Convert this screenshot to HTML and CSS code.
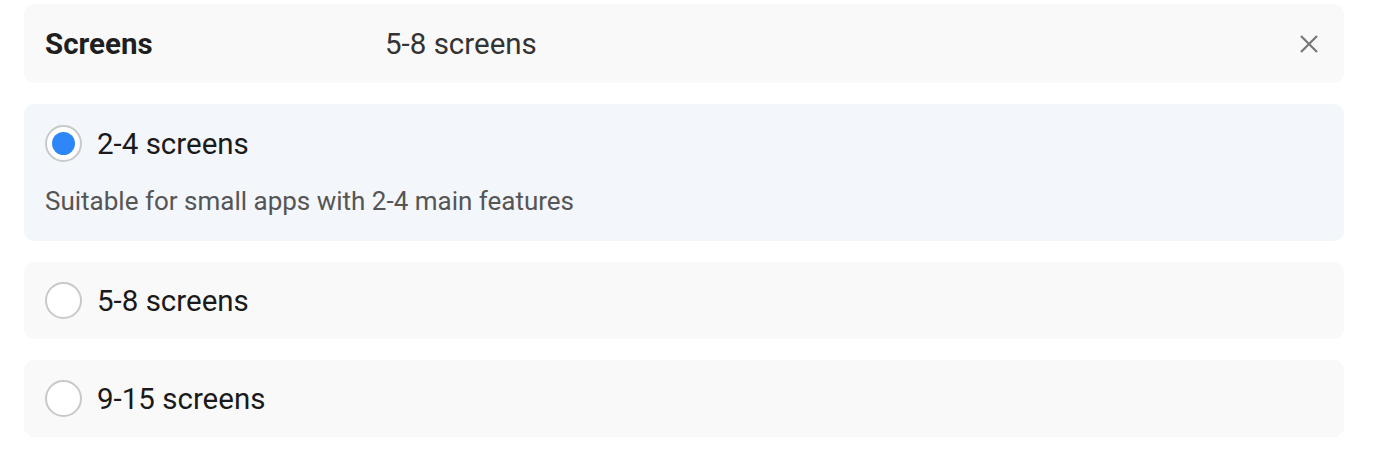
FILE: index.html
```html
<!DOCTYPE html>
<html lang="en">
<head>
<meta charset="utf-8">
<title>Screens</title>
<link rel="stylesheet" href="styles.css">
</head>
<body>
<div class="panel">
  <div class="header">
    <div class="header-label">Screens</div>
    <div class="header-value">5-8 screens</div>
    <button class="close" aria-label="Close">
      <svg width="20" height="20" viewBox="0 0 20 20"><path d="M2 2 L18 18 M18 2 L2 18" stroke="#777" stroke-width="2.2" fill="none"/></svg>
    </button>
  </div>
  <div class="option selected">
    <div class="option-row">
      <span class="radio checked"><span class="dot"></span></span>
      <span class="option-label">2-4 screens</span>
    </div>
    <div class="option-desc">Suitable for small apps with 2-4 main features</div>
  </div>
  <div class="option">
    <div class="option-row">
      <span class="radio"></span>
      <span class="option-label">5-8 screens</span>
    </div>
  </div>
  <div class="option">
    <div class="option-row">
      <span class="radio"></span>
      <span class="option-label">9-15 screens</span>
    </div>
  </div>
</div>
</body>
</html>
```
FILE: styles.css
```css
* { box-sizing: border-box; }
html, body { margin: 0; padding: 0; background: #ffffff; }
body {
  font-family: Roboto, "Liberation Sans", Arial, sans-serif;
  color: #1a1a1a;
}
.panel {
  width: 1320px;
  margin-left: 24px;
  padding-top: 4px;
  display: flex;
  flex-direction: column;
  gap: 21px;
}
.header {
  height: 79px;
  background: #f9f9f9;
  border-radius: 10px;
  display: flex;
  align-items: center;
  padding: 0 25px 0 21px;
}
.header-label {
  width: 340px;
  font-size: 29.5px;
  line-height: 34px;
  font-weight: 700;
  color: #1f1f1f;
}
.header-value {
  flex: 1;
  font-size: 29.5px;
  line-height: 34px;
  color: #333;
}
.close {
  border: 0;
  background: none;
  padding: 0;
  width: 20px;
  height: 20px;
  display: flex;
  cursor: pointer;
}
.option {
  background: #f9f9f9;
  border-radius: 10px;
  padding: 20px 21px;
  height: 77px;
}
.option.selected {
  background: #f3f6fb;
  height: 137px;
  padding-top: 21px;
}
.option-row {
  display: flex;
  align-items: center;
  gap: 15px;
  height: 37px;
}
.radio {
  width: 37px;
  height: 37px;
  border-radius: 50%;
  border: 2px solid #c9c9c9;
  background: #fff;
  display: flex;
  align-items: center;
  justify-content: center;
  flex: none;
}
.dot {
  width: 23px;
  height: 23px;
  border-radius: 50%;
  background: #2f86f6;
}
.option-label {
  font-size: 29.5px;
  line-height: 34px;
  color: #1a1a1a;
}
.option-desc {
  margin-top: 24px;
  font-size: 26px;
  line-height: 30px;
  color: #555;
}
```
